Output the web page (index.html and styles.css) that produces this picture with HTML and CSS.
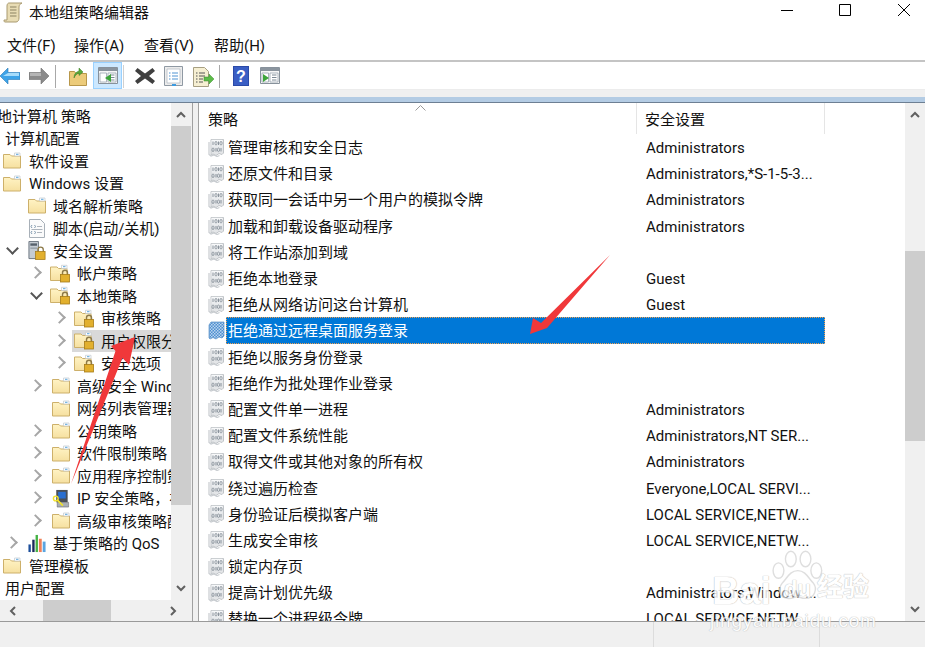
FILE: index.html
```html
<!DOCTYPE html>
<html lang="zh-CN">
<head>
<meta charset="utf-8">
<title>本地组策略编辑器</title>
<link rel="stylesheet" href="styles.css">
</head>
<body>
<svg class="defs" width="0" height="0" aria-hidden="true">
  <defs>
    <linearGradient id="fg" x1="0" y1="0" x2="0" y2="1"><stop offset="0" stop-color="#fff3c4"/><stop offset="1" stop-color="#f6e0a0"/></linearGradient>
    <linearGradient id="pg" x1="0" y1="0" x2="0" y2="1"><stop offset="0" stop-color="#f9fafb"/><stop offset="1" stop-color="#dfe2e5"/></linearGradient>
    <pattern id="chk" width="3" height="3" patternUnits="userSpaceOnUse"><rect width="3" height="3" fill="#4f8fd0"/><rect width="1.500" height="1.500" fill="#b8d4ee"/><rect x="1.500" y="1.500" width="1.500" height="1.500" fill="#b8d4ee"/></pattern>
    <symbol id="folder" viewBox="0 0 18 18">
      <path d="M.5 3h6.500l1.500 1.500h9v12H.5z" fill="url(#fg)" stroke="#cdb06a"/>
      <path d="M11.500 1.500h5.500v3h-5.500z" fill="#fff" stroke="#c2c9cf" stroke-width=".7"/>
      <path d="M13 2.800h2.500" stroke="#59a5dd"/>
    </symbol>
    <symbol id="lockfolder" viewBox="0 0 20 18">
      <path d="M.5 2.500h6.500l1.500 1.500H17v12H.5z" fill="url(#fg)" stroke="#cdb06a"/>
      <path d="M11.500 .8h5.500v3.200h-5.500z" fill="#fff" stroke="#c2c9cf" stroke-width=".7"/>
      <path d="M13 2.200h2.500" stroke="#59a5dd"/>
      <path d="M12.500 10.500V8.300a2.500 2.500 0 0 1 5 0v2.200" fill="none" stroke="#8d7a4a" stroke-width="1.400"/>
      <rect x="10.500" y="10" width="9" height="7.500" fill="#e2b02e" stroke="#a67c18" stroke-width=".8"/>
    </symbol>
    <symbol id="lockserver" viewBox="0 0 18 20">
      <path d="M.5 .5h10v18H.5z" fill="#c5ccd3" stroke="#6c7680"/>
      <path d="M2 2.500h7v2.500H2z" fill="#56616c"/><path d="M2 7h7v1H2z" fill="#7f8a95"/>
      <path d="M10 11.500V9.300a2.800 2.800 0 0 1 5.600 0v2.200" fill="none" stroke="#8d7a4a" stroke-width="1.400"/>
      <rect x="7.500" y="11" width="10" height="8.500" fill="#e2b02e" stroke="#a67c18" stroke-width=".8"/>
    </symbol>
    <symbol id="script" viewBox="0 0 17 19">
      <path d="M1 .5h11l4 4v14H1z" fill="#fbfbfb" stroke="#a8b0b8"/>
      <path d="M3.500 6 2.500 7.500l1 1.500M6 6l1 1.500L6 9M3.500 12l-1 1.500 1 1.500M6 12l1 1.500L6 15" fill="none" stroke="#5f7f99" stroke-width=".8"/>
      <path d="M8.500 7.500h5M8.500 13.500h5M3 10.500h11" stroke="#9aa3ad" stroke-width=".8"/>
    </symbol>
    <symbol id="policy" viewBox="0 0 17 19">
      <path d="M3 1.500h12.500v13.500l-1.500 1.500-3-1-3 2-3-1.500-2 1z" fill="#e4e6e8" stroke="#c0c4c8"/>
      <path d="M1 4v12.500l2 1.500 3-1 3 1.500 2.500-1" fill="none" stroke="#c8ccd0" stroke-width="1.200"/>
      <path d="M3.500 1.800h11v11H3.500z" fill="url(#pg)"/>
      <path d="M5 3.500v3.500M10.500 3.500v3.500M8 10v3.500M13 10v3.500" stroke="#8a939c"/>
      <ellipse cx="8" cy="5.200" rx="1.100" ry="1.800" fill="none" stroke="#8a939c" stroke-width=".9"/>
      <ellipse cx="13" cy="5.200" rx="1.100" ry="1.800" fill="none" stroke="#8a939c" stroke-width=".9"/>
      <ellipse cx="5" cy="11.800" rx="1.100" ry="1.800" fill="none" stroke="#8a939c" stroke-width=".9"/>
      <ellipse cx="10.500" cy="11.800" rx="1.100" ry="1.800" fill="none" stroke="#8a939c" stroke-width=".9"/>
    </symbol>
    <symbol id="policy-sel" viewBox="0 0 17 19">
      <path d="M3 1h13v14l-2 2-3-1-3 2-3-1.500-3 1.500-1-1V4z" fill="url(#chk)" stroke="#3f7fc0" stroke-width=".6"/>
    </symbol>
    <symbol id="console" viewBox="0 0 20 17">
      <path d="M.5 .5h19v16H.5z" fill="#f6f6f6" stroke="#87919b"/>
      <path d="M1 1h18v3H1z" fill="#8a949e"/>
      <path d="M2 6h6.500v9H2zM10 6h8v9h-8z" fill="#fff" stroke="#9aa5b0" stroke-width=".8"/>
      <path d="M12 8h4.500M12 10.500h4.500M12 13h4.500" stroke="#7b8894"/>
    </symbol>
  </defs>
</svg>

<header class="titlebar">
  <svg class="app-icon" width="20" height="21" viewBox="0 0 20 21">
    <path d="M6 1h13c-2 1-3 2-3 4v11c0 2-1 4-3 4H2c-1 0-1-1-1-2h3V4c0-2 1-3 2-3z" fill="#e8dcb4" stroke="#a99a70"/>
    <path d="M7 5h6.500M7 8h6.500M7 11h6.500M7 14h6.500" stroke="#8b8263"/>
  </svg>
  <span class="title">本地组策略编辑器</span>
  <div class="wincontrols">
    <svg width="12" height="12" viewBox="0 0 12 12"><path d="M0 6.500h12" stroke="#000"/></svg>
    <svg width="12" height="12" viewBox="0 0 12 12"><path d="M.5 .5h11v11H.5z" fill="none" stroke="#000"/></svg>
    <svg width="12" height="12" viewBox="0 0 12 12"><path d="M0 0l12 12M12 0 0 12" stroke="#000"/></svg>
  </div>
</header>

<nav class="menubar">
  <span>文件(F)</span><span>操作(A)</span><span>查看(V)</span><span>帮助(H)</span>
</nav>

<div class="toolbar">
  <svg class="tb tb-back" width="20" height="16" viewBox="0 0 20 16"><path d="M0 8 8 0v4.500h12v7H8V16z" fill="#3da3e8" stroke="#2a78b5" stroke-width=".6"/><path d="M8 5h11v3H3z" fill="#a6dcfb"/></svg>
  <svg class="tb tb-fwd" width="20" height="16" viewBox="0 0 20 16"><path d="M20 8 12 0v4.500H0v7h12V16z" fill="#8b8b8b" stroke="#6e6e6e" stroke-width=".6"/><path d="M1 5h11v3H1z" fill="#b5b5b5"/></svg>
  <i class="tsep tsep-a"></i>
  <svg class="tb tb-up" width="18" height="20" viewBox="0 0 18 20"><path d="M.5 5.500h5l1.500 2h10.500v12H.5z" fill="#eccb7a" stroke="#b8974a"/><path d="M5 12c0-4 2-6 5-7V2l4 4-4 3.500V7c-2 .6-4 2.500-5 5z" fill="#5aa83c" stroke="#3a7d25" stroke-width=".5"/></svg>
  <span class="tb-active"><svg width="20" height="17"><use href="#console"/></svg><svg class="tri" width="6" height="8" viewBox="0 0 6 8"><path d="M6 0v8L0 4z" fill="#3ea53a"/></svg></span>
  <i class="tsep tsep-b"></i>
  <svg class="tb tb-x" width="20" height="18" viewBox="0 0 20 18"><path d="M2.500 1 10 6.500 17.500 1 20 4l-6 5 6 5-2.500 3L10 11.500 2.500 17 0 14l6-5-6-5z" fill="#3f3f3f"/></svg>
  <svg class="tb tb-prop" width="19" height="20" viewBox="0 0 19 20"><path d="M.5 .5h18v19H.5z" fill="#ececec" stroke="#8f99a3"/><path d="M3 3h13v14H3z" fill="#fff" stroke="#b5bdc5" stroke-width=".8"/><path d="M5 7h1.500M8 7h6M5 10h1.500M8 10h6M5 13h1.500M8 13h6" stroke="#4f93d2"/><path d="M8 19h4" stroke="#3d9be0" stroke-width="2"/></svg>
  <svg class="tb tb-exp" width="21" height="20" viewBox="0 0 21 20"><path d="M.5 .5h11l4 4v15H.5z" fill="#f6efd2" stroke="#a79f82"/><path d="M3 6h1.500M6 6h6M3 9h1.500M6 9h6M3 12h1.500M6 12h4M3 15h1.500M6 15h4" stroke="#555"/><path d="M11 10h5V7l5 5-5 5v-3h-5z" fill="#5cbb48" stroke="#3c8f2f" stroke-width=".5"/></svg>
  <i class="tsep tsep-c"></i>
  <svg class="tb tb-help" width="16" height="20" viewBox="0 0 16 20"><rect width="16" height="20" fill="#2b4aa8"/><rect x="1" y="1" width="14" height="18" fill="#3a5ec4"/><text x="8" y="16" text-anchor="middle" class="qmark">?</text></svg>
  <span class="tb-action"><svg width="20" height="17"><use href="#console"/></svg><svg class="tri" width="6" height="8" viewBox="0 0 6 8"><path d="M0 0v8l6-4z" fill="#3ea53a"/></svg></span>
</div>

<div class="band"></div>
<div class="blueband"></div>

<main class="panes">
  <section class="left">
    <div class="tree-wrap">
      <div class="tree">
        <div class="node d-root"><span class="clip-text">本地计算机 策略</span></div>
        <div class="node d-root"><span>计算机配置</span></div>
        <div class="node d0"><svg class="ico"><use href="#folder"/></svg><span>软件设置</span></div>
        <div class="node d0"><svg class="ico"><use href="#folder"/></svg><span>Windows 设置</span></div>
        <div class="node d1"><b class="chev"></b><svg class="ico"><use href="#folder"/></svg><span>域名解析策略</span></div>
        <div class="node d1"><b class="chev"></b><svg class="ico"><use href="#script"/></svg><span>脚本(启动/关机)</span></div>
        <div class="node d1"><b class="chev open"></b><svg class="ico"><use href="#lockserver"/></svg><span>安全设置</span></div>
        <div class="node d2"><b class="chev closed"></b><svg class="ico ico-lock"><use href="#lockfolder"/></svg><span>帐户策略</span></div>
        <div class="node d2"><b class="chev open"></b><svg class="ico ico-lock"><use href="#lockfolder"/></svg><span>本地策略</span></div>
        <div class="node d3"><b class="chev closed"></b><svg class="ico ico-lock"><use href="#lockfolder"/></svg><span>审核策略</span></div>
        <div class="node d3 current"><b class="chev closed"></b><svg class="ico ico-lock"><use href="#lockfolder"/></svg><span class="cur-label">用户权限分配</span></div>
        <div class="node d3"><b class="chev closed"></b><svg class="ico ico-lock"><use href="#lockfolder"/></svg><span>安全选项</span></div>
        <div class="node d2"><b class="chev closed"></b><svg class="ico"><use href="#folder"/></svg><span>高级安全 Windows 防火墙</span></div>
        <div class="node d2"><b class="chev"></b><svg class="ico"><use href="#folder"/></svg><span>网络列表管理器策略</span></div>
        <div class="node d2"><b class="chev closed"></b><svg class="ico"><use href="#folder"/></svg><span>公钥策略</span></div>
        <div class="node d2"><b class="chev closed"></b><svg class="ico"><use href="#folder"/></svg><span>软件限制策略</span></div>
        <div class="node d2"><b class="chev closed"></b><svg class="ico"><use href="#folder"/></svg><span>应用程序控制策略</span></div>
        <div class="node d2"><b class="chev closed"></b><svg class="ico" viewBox="0 0 18 20"><path d="M4 1h12v13H4z" fill="#4b5057"/><path d="M6 3h8v7H6z" fill="#2a6fd0"/><path d="M5 14h12v5H5z" fill="#a9aeb4" stroke="#555" stroke-width=".5"/><circle cx="3.500" cy="10" r="2.500" fill="none" stroke="#f2e22a" stroke-width="1.500"/><path d="M5 11.500l6 6" stroke="#f2e22a" stroke-width="1.800"/></svg><span>IP 安全策略，在本地计算机</span></div>
        <div class="node d2"><b class="chev closed"></b><svg class="ico"><use href="#folder"/></svg><span>高级审核策略配置</span></div>
        <div class="node d1"><b class="chev closed"></b><svg class="ico ico-wide" viewBox="0 0 20 20"><path d="M1 11h2.500v8H1z" fill="#1d4f9c"/><path d="M5 6h2.500v13H5z" fill="#1a2a5a"/><path d="M8.500 1H11v18H8.500z" fill="#44b244"/><path d="M12 5h3v14h-3z" fill="#f08058"/><path d="M16 8h3v11h-3z" fill="#5aa5e0"/></svg><span>基于策略的 QoS</span></div>
        <div class="node d0"><svg class="ico"><use href="#folder"/></svg><span>管理模板</span></div>
        <div class="node d-root"><span>用户配置</span></div>
      </div>
      <div class="vscroll">
        <button class="sb-btn"><svg width="10" height="7" viewBox="0 0 10 7"><path d="M1 6l4-4 4 4" fill="none" stroke="#606060" stroke-width="2"/></svg></button>
        <div class="vthumb vthumb-left"></div>
        <div class="sb-fill"></div>
        <button class="sb-btn"><svg width="10" height="7" viewBox="0 0 10 7"><path d="M1 1l4 4 4-4" fill="none" stroke="#606060" stroke-width="2"/></svg></button>
      </div>
    </div>
    <div class="hscroll">
      <svg width="7" height="10" viewBox="0 0 7 10"><path d="M6 1 2 5l4 4" fill="none" stroke="#606060" stroke-width="2"/></svg>
      <div class="hthumb"></div>
      <svg class="hright" width="7" height="10" viewBox="0 0 7 10"><path d="M1 1l4 4-4 4" fill="none" stroke="#606060" stroke-width="2"/></svg>
    </div>
  </section>

  <section class="right">
    <div class="list">
      <div class="list-head">
        <svg class="sort" width="11" height="6" viewBox="0 0 11 6"><path d="M.5 5.500 5.500 .5l5 5" fill="none" stroke="#9a9a9a"/></svg>
        <div class="col-name">策略</div>
        <div class="col-val">安全设置</div>
      </div>
      <div class="rows">
        <div class="row"><svg class="pico"><use href="#policy"/></svg><div class="cells"><span class="cname">管理审核和安全日志</span><span class="cval">Administrators</span></div></div>
        <div class="row"><svg class="pico"><use href="#policy"/></svg><div class="cells"><span class="cname">还原文件和目录</span><span class="cval">Administrators,*S-1-5-3...</span></div></div>
        <div class="row"><svg class="pico"><use href="#policy"/></svg><div class="cells"><span class="cname">获取同一会话中另一个用户的模拟令牌</span><span class="cval">Administrators</span></div></div>
        <div class="row"><svg class="pico"><use href="#policy"/></svg><div class="cells"><span class="cname">加载和卸载设备驱动程序</span><span class="cval">Administrators</span></div></div>
        <div class="row"><svg class="pico"><use href="#policy"/></svg><div class="cells"><span class="cname">将工作站添加到域</span><span class="cval"></span></div></div>
        <div class="row"><svg class="pico"><use href="#policy"/></svg><div class="cells"><span class="cname">拒绝本地登录</span><span class="cval">Guest</span></div></div>
        <div class="row"><svg class="pico"><use href="#policy"/></svg><div class="cells"><span class="cname">拒绝从网络访问这台计算机</span><span class="cval">Guest</span></div></div>
        <div class="row selected"><svg class="pico"><use href="#policy-sel"/></svg><div class="cells"><span class="cname">拒绝通过远程桌面服务登录</span><span class="cval"></span></div></div>
        <div class="row"><svg class="pico"><use href="#policy"/></svg><div class="cells"><span class="cname">拒绝以服务身份登录</span><span class="cval"></span></div></div>
        <div class="row"><svg class="pico"><use href="#policy"/></svg><div class="cells"><span class="cname">拒绝作为批处理作业登录</span><span class="cval"></span></div></div>
        <div class="row"><svg class="pico"><use href="#policy"/></svg><div class="cells"><span class="cname">配置文件单一进程</span><span class="cval">Administrators</span></div></div>
        <div class="row"><svg class="pico"><use href="#policy"/></svg><div class="cells"><span class="cname">配置文件系统性能</span><span class="cval">Administrators,NT SER...</span></div></div>
        <div class="row"><svg class="pico"><use href="#policy"/></svg><div class="cells"><span class="cname">取得文件或其他对象的所有权</span><span class="cval">Administrators</span></div></div>
        <div class="row"><svg class="pico"><use href="#policy"/></svg><div class="cells"><span class="cname">绕过遍历检查</span><span class="cval">Everyone,LOCAL SERVI...</span></div></div>
        <div class="row"><svg class="pico"><use href="#policy"/></svg><div class="cells"><span class="cname">身份验证后模拟客户端</span><span class="cval">LOCAL SERVICE,NETW...</span></div></div>
        <div class="row"><svg class="pico"><use href="#policy"/></svg><div class="cells"><span class="cname">生成安全审核</span><span class="cval">LOCAL SERVICE,NETW...</span></div></div>
        <div class="row"><svg class="pico"><use href="#policy"/></svg><div class="cells"><span class="cname">锁定内存页</span><span class="cval"></span></div></div>
        <div class="row"><svg class="pico"><use href="#policy"/></svg><div class="cells"><span class="cname">提高计划优先级</span><span class="cval">Administrators,Window ...</span></div></div>
        <div class="row"><svg class="pico"><use href="#policy"/></svg><div class="cells"><span class="cname">替换一个进程级令牌</span><span class="cval">LOCAL SERVICE,NETW...</span></div></div>
      </div>
    </div>
    <div class="vscroll">
      <button class="sb-btn"><svg width="10" height="7" viewBox="0 0 10 7"><path d="M1 6l4-4 4 4" fill="none" stroke="#606060" stroke-width="2"/></svg></button>
      <div class="sb-gap"></div>
      <div class="vthumb vthumb-right"></div>
      <div class="sb-fill"></div>
      <button class="sb-btn"><svg width="10" height="7" viewBox="0 0 10 7"><path d="M1 1l4 4 4-4" fill="none" stroke="#606060" stroke-width="2"/></svg></button>
    </div>
  </section>
</main>

<footer class="status"><i class="st st-a"></i><i class="st st-b"></i></footer>

<svg class="arrows" width="925" height="647" viewBox="0 0 925 647" aria-hidden="true">
  <path d="M135 337 129 365 122.500 358 71 484 115.500 351 111 346z" fill="#f0383a"/>
  <path d="M610 255 547 328 530 334 533 318 541 323z" fill="#f0383a"/>
</svg>

<div class="wm" aria-hidden="true">
  <svg class="wm-paw" width="54" height="58" viewBox="0 0 70 66"><g fill="#fff" fill-opacity=".6" stroke="#d9d9d9" stroke-width="1.800"><ellipse cx="11" cy="26" rx="7" ry="10"/><ellipse cx="27" cy="11" rx="7" ry="10"/><ellipse cx="46" cy="11" rx="7" ry="10"/><ellipse cx="60" cy="26" rx="7" ry="10"/><path d="M36 26c10 0 14 10 20 16 6 8 2 20-10 20-6 0-7-2-11-2s-6 3-13 2C12 61 10 50 16 42c6-6 10-16 20-16z"/></g></svg>
  <span class="wm-bai">Bai</span>
  <span class="wm-du">du</span>
  <span class="wm-jy">经验</span>
  <span class="wm-url">jingyan.baidu.com</span>
</div>
</body>
</html>
```
FILE: styles.css
```css
* { box-sizing: border-box; }
html, body { margin: 0; padding: 0; }
body {
  width: 925px;
  height: 647px;
  overflow: hidden;
  position: relative;
  background: #fff;
  color: #111;
  font-family: Roboto, "Noto Sans CJK SC", sans-serif;
  font-size: 15px;
}
.defs { position: absolute; }

.titlebar { height: 30px; display: flex; align-items: center; padding-left: 3px; position: relative; }
.app-icon { margin-right: 6px; margin-top: -6px; }
.title { margin-top: -4px; line-height: 20px; }
.wincontrols { margin-left: auto; display: flex; gap: 47px; padding-right: 15px; margin-top: -10px; }
.wincontrols svg { display: block; }
.wincontrols svg:first-child { margin-right: -1px; }

.menubar { height: 32px; display: flex; gap: 18px; padding-left: 7px; align-items: center; border-bottom: 2px solid #c4c4c4; line-height: 20px; padding-top: 2px; }
.menubar span { min-width: 52px; }
.menubar span:first-child { min-width: 49px; }

.toolbar { height: 27px; position: relative; background: #fff; }
.tb { position: absolute; display: block; }
.tb-back { left: 0; top: 6px; }
.tb-fwd { left: 29px; top: 6px; }
.tb-up { left: 69px; top: 4px; }
.tb-x { left: 135px; top: 5px; }
.tb-prop { left: 164px; top: 4px; }
.tb-exp { left: 193px; top: 5px; }
.tb-help { left: 233px; top: 4px; }
.tsep { position: absolute; top: 3px; width: 1px; height: 23px; background: #a8a8a8; }
.tsep-a { left: 55px; }
.tsep-b { left: 123px; background: #d0d0d0; }
.tsep-c { left: 219px; }
.tb-active, .tb-action { position: absolute; display: flex; align-items: center; justify-content: center; }
.tb-active { left: 93px; top: 0; width: 29px; height: 27px; background: #cce8ff; border: 1px solid #99d1ff; }
.tb-action { left: 260px; top: 5px; width: 20px; height: 17px; }
.tri { position: absolute; left: 50%; top: 50%; margin-left: -3px; margin-top: -2px; }
.tb-action .tri { margin-left: -7px; }
.tb-active .tri { margin-left: -3px; }
.qmark { font-family: "Liberation Sans", sans-serif; font-size: 16px; font-weight: bold; fill: #fff; }

.band { height: 8px; background: #f0f0f0; border-top: 1px solid #ececec; }
.blueband { height: 6px; background: #b4cce4; border-bottom: 1px solid #6d7f93; }

.panes { height: 519px; display: flex; background: #f0f0f0; border-bottom: 1px solid #9a9a9a; }

.left { width: 193px; flex: none; display: flex; flex-direction: column; border-right: 1px solid #a0a0a0; }
.tree-wrap { flex: 1; display: flex; min-height: 0; }
.tree { width: 171px; background: #fff; overflow: hidden; padding-top: 1.500px; flex: none; }
.node { height: 22.500px; display: flex; align-items: center; white-space: nowrap; overflow: hidden; line-height: 20px; }
.node span { padding-top: 2px; }
.d-root { padding-left: 5px; }
.clip-text { margin-left: -23px; }
.d0 { padding-left: 3px; }
.d0 .ico { margin-right: 8px; }
.d1 { padding-left: 6px; }
.d1 .chev { width: 22px; }
.d2 { padding-left: 30px; }
.d2 .chev { width: 22px; }
.d3 { padding-left: 54px; }
.d3 .chev { width: 22px; }
.chev { height: 12px; flex: none; display: block; position: relative; }
.chev.closed::before, .chev.open::before {
  content: ""; position: absolute; left: 1px; top: 1px; width: 7px; height: 7px;
  border-right: 2px solid #a6a6a6; border-top: 2px solid #a6a6a6;
  transform: rotate(45deg);
}
.chev.open::before { left: 2px; top: -1px; border-color: #555; transform: rotate(135deg); }
.ico { width: 18px; height: 19px; flex: none; margin-right: 7px; display: block; }
.ico-lock { width: 20px; margin-left: -2px; }
.ico-wide { width: 20px; margin-left: -1px; margin-right: 6px; }
.current { background: linear-gradient(to right, transparent 72px, #d9d9d9 72px); }

.vscroll { width: 20px; flex: none; display: flex; flex-direction: column; background: #f0f0f0; }
.sb-btn { height: 23px; flex: none; padding: 0; border: 0; background: #f0f0f0; display: flex; align-items: center; justify-content: center; }
.sb-gap { height: 125px; flex: none; }
.sb-fill { flex: 1; }
.vthumb { background: #cdcdcd; flex: none; }
.vthumb-left { height: 379px; }
.vthumb-right { height: 190px; }
.hscroll { height: 21px; flex: none; width: 191px; background: #f0f0f0; display: flex; align-items: center; padding-left: 9px; }
.hthumb { width: 68px; height: 21px; background: #cdcdcd; margin-left: 27px; }
.hright { margin-left: auto; margin-right: 14px; }

.right { flex: 1; display: flex; margin-left: 5px; background: #fff; border-left: 1px solid #a0a0a0; min-width: 0; }
.list { flex: 1; min-width: 0; overflow: hidden; position: relative; }
.list-head { height: 31px; display: grid; grid-template-columns: 438px 188px; align-items: center; line-height: 20px; }
.col-name { padding-left: 9px; height: 100%; border-right: 1px solid #e5e5e5; display: flex; align-items: center; padding-top: 3px; }
.col-val { padding-left: 8px; height: 100%; border-right: 1px solid #e5e5e5; display: flex; align-items: center; padding-top: 3px; }
.sort { position: absolute; left: 216px; top: 2px; }
.rows { height: 488px; overflow: hidden; }
.row { height: 26.200px; width: 626px; display: flex; align-items: center; padding-left: 9px; }
.pico { width: 17px; height: 19px; flex: none; margin-right: 1px; display: block; }
.cells { flex: 1; height: 26.200px; display: grid; grid-template-columns: 411px 186px; align-items: center; line-height: 20px; border: 1px solid transparent; white-space: nowrap; }
.cname { padding-left: 1px; padding-top: 2px; }
.cval { padding-left: 8px; padding-top: 2px; }
.selected .cells { background: #0078d7; color: #fff; border: 1px dotted #f0a050; }

.status { height: 25px; background: #f0f0f0; position: relative; }
.st { position: absolute; top: 0; width: 1px; height: 100%; background: #dcdcdc; }
.st-a { left: 653px; }
.st-b { left: 819px; }

.arrows { position: absolute; left: 0; top: 0; pointer-events: none; }

.wm { position: absolute; left: 705px; top: 545px; width: 180px; height: 90px; pointer-events: none; opacity: .85; }
.wm span { position: absolute; color: #fff; white-space: nowrap; text-shadow: 0 0 1px #b5b5b5, 0 0 1px #b5b5b5; line-height: 1; }
.wm-paw { position: absolute; left: 65px; top: 2px; }
.wm-bai { left: 7px; top: 27px; font: 700 38px "Liberation Sans", sans-serif; }
.wm-du { left: 79px; top: 33px; font: 700 22px "Liberation Sans", sans-serif; }
.wm-jy { left: 112px; top: 27px; font: 700 26px "Noto Sans CJK SC", sans-serif; }
.wm-url { left: 5px; top: 66px; font: 400 19px "Liberation Sans", sans-serif; letter-spacing: .8px; }
```
